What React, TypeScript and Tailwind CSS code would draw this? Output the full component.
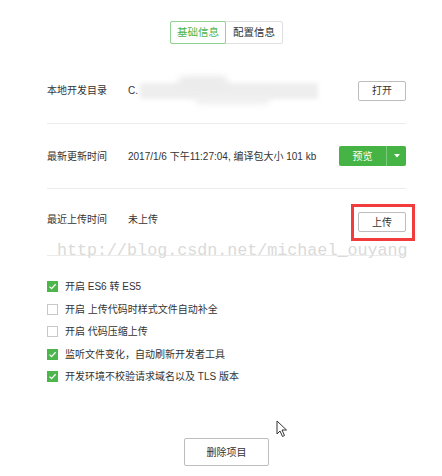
import React, { useState } from 'react';

const font = { fontFamily: '"Liberation Sans", "Noto Sans CJK SC", sans-serif' };

interface Option {
  label: string;
  checked: boolean;
}

const initialOptions: Option[] = [
  { label: '开启 ES6 转 ES5', checked: true },
  { label: '开启 上传代码时样式文件自动补全', checked: false },
  { label: '开启 代码压缩上传', checked: false },
  { label: '监听文件变化，自动刷新开发者工具', checked: true },
  { label: '开发环境不校验请求域名以及 TLS 版本', checked: true },
];

function Check({ checked }: { checked: boolean }) {
  return checked ? (
    <span className="flex h-[11px] w-[11px] items-center justify-center bg-[#4cb54c]">
      <svg width="9" height="9" viewBox="0 0 9 9" fill="none">
        <path d="M1.5 4.6 L3.6 6.6 L7.6 2.2" stroke="white" strokeWidth="1.3" />
      </svg>
    </span>
  ) : (
    <span className="h-[11px] w-[11px] border border-[#c8c8c8] bg-white" />
  );
}

export default function App() {
  const [tab, setTab] = useState(0);
  const [options, setOptions] = useState(initialOptions);

  const toggle = (i: number) =>
    setOptions(prev => prev.map((o, j) => (j === i ? { ...o, checked: !o.checked } : o)));

  return (
    <div className="relative h-[476px] w-[442px] overflow-hidden bg-white text-[10px] text-[#333]" style={font}>
      <div className="ml-[47px] w-[359px]">
        {/* tabs */}
        <div className="flex justify-center pt-[21px]">
          <div className="flex h-[23px] rounded-[2px] border border-[#e0e0e0] text-[10.5px]">
            {['基础信息', '配置信息'].map((t, i) => (
              <button
                key={t}
                onClick={() => setTab(i)}
                className={
                  'flex h-[23px] -my-px w-[56px] items-center justify-center rounded-[2px] ' +
                  (tab === i ? 'border border-[#8fd18f] text-[#4cb54c] -ml-px' : 'text-[#333]')
                }
              >
                {t}
              </button>
            ))}
          </div>
        </div>

        {/* row 1 */}
        <div className="mt-[14px] flex h-[66px] items-center border-b border-[#ececec]">
          <span className="w-[81px]">本地开发目录</span>
          <span>C.</span>
          <div className="relative ml-[2px] h-[22px] w-[178px]">
            <div className="absolute left-0 top-[3px] h-[16px] w-[178px] bg-[#eeeeee] blur-[2px]" />
            <div className="absolute left-[38px] top-[-4px] h-[12px] w-[50px] rounded-full bg-[#ebebeb] blur-[3px]" />
            <div className="absolute left-[55px] top-[14px] h-[10px] w-[75px] rounded-full bg-[#efefef] blur-[3px]" />
          </div>
          <button className="ml-auto h-[20px] w-[48px] rounded-[2px] border border-[#bdbdbd] bg-white">打开</button>
        </div>

        {/* row 2 */}
        <div className="flex h-[65px] items-center border-b border-[#ececec]">
          <span className="w-[81px]">最新更新时间</span>
          <span>2017/1/6 下午11:27:04, 编译包大小 101 kb</span>
          <div className="ml-auto flex h-[20px] overflow-hidden rounded-[2px] bg-[#45b445] text-white">
            <button className="w-[47px]">预览</button>
            <button className="flex w-[20px] items-center justify-center border-l border-[#7cc97c]">
              <svg width="6" height="4" viewBox="0 0 6 4">
                <path d="M0 0 H6 L3 3.5 Z" fill="white" />
              </svg>
            </button>
          </div>
        </div>

        {/* row 3 */}
        <div className="flex h-[67px] items-center border-b border-[#ececec]">
          <span className="-mt-[5px] w-[81px]">最近上传时间</span>
          <span className="-mt-[5px]">未上传</span>
          <span className="relative ml-auto">
            <span className="pointer-events-none absolute -left-[7px] -right-[9px] -top-[8px] -bottom-[9px] border-[3px] border-[#f03c3c]" />
            <button className="h-[20px] w-[48px] rounded-[2px] border border-[#bdbdbd] bg-white">上传</button>
          </span>
        </div>

        {/* options */}
        <div className="mt-[24px] flex flex-col gap-[9.5px]">
          {options.map((o, i) => (
            <label key={o.label} className="flex h-[13px] cursor-pointer items-center gap-[7px]" onClick={() => toggle(i)}>
              <Check checked={o.checked} />
              <span>{o.label}</span>
            </label>
          ))}
        </div>

        <div className="mt-[55px] flex justify-center">
          <button className="h-[28px] w-[85px] rounded-[2px] border border-[#bdbdbd] bg-white">删除项目</button>
        </div>
      </div>

      {/* watermark */}
      <div
        className="pointer-events-none absolute left-[57px] top-[238px] text-[16.7px] text-[#dadada]"
        style={{ fontFamily: '"Liberation Mono", monospace' }}
      >
        http://blog.csdn.net/michael_ouyang
      </div>

      {/* mouse cursor */}
      <svg className="pointer-events-none absolute left-[276px] top-[420px]" width="12" height="18" viewBox="0 0 12 18">
        <path d="M1 1 L1 14 L4 11 L6.5 16.5 L8.5 15.5 L6 10 L10.5 10 Z" fill="white" stroke="#333" strokeWidth="1" />
      </svg>
    </div>
  );
}
